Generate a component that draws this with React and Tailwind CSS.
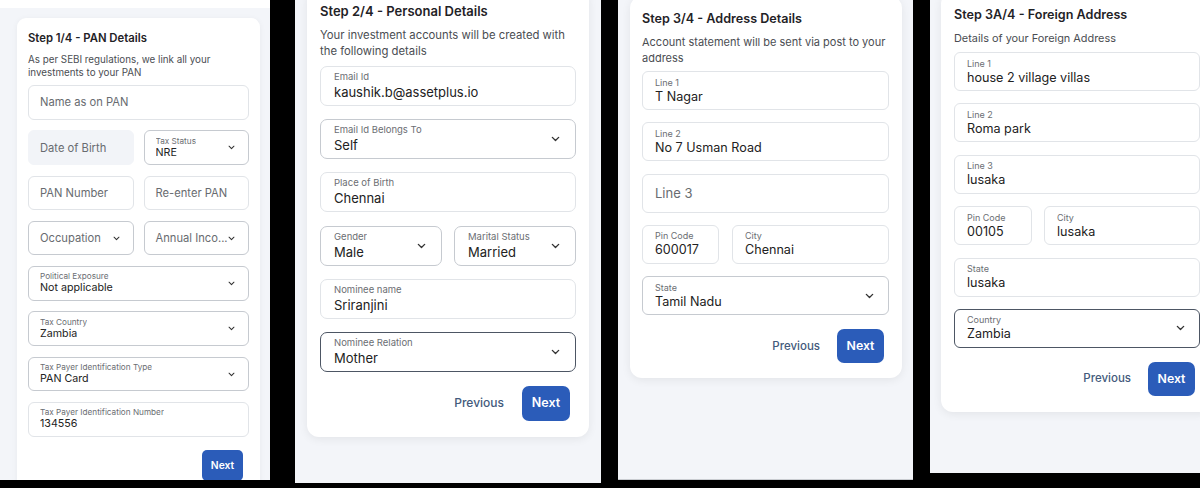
import React from "react"

function ChevronDown({ className }) {
  return (
    <svg viewBox="0 0 10 6" className={className} fill="none" stroke="currentColor" strokeWidth="1.5" strokeLinecap="round" strokeLinejoin="round">
      <path d="M1.5 1.2l3.5 3.5 3.5-3.5" />
    </svg>
  )
}

const S1 = {
  box: "h-[34.5px] rounded-[6px] px-[11px]",
  label: "text-[8.2px] leading-[10px] text-[#6b6e73] truncate",
  value: "text-[10.7px] leading-[14px] text-[#222] truncate",
  placeholder: "text-[11.2px] leading-[14px] text-[#686b70] whitespace-nowrap",
  chev: "w-[7px] h-[5px] text-[#333] shrink-0 mr-[2px]",
}
const S2 = {
  box: "h-[40px] rounded-[7px] px-[13px]",
  label: "text-[9.5px] leading-[12px] text-[#6b6e73] truncate",
  value: "text-[13px] leading-[18px] text-[#222] truncate",
  placeholder: "text-[13px] leading-[18px] text-[#686b70] whitespace-nowrap",
  chev: "w-[9px] h-[6px] text-[#333] shrink-0 mr-[2px]",
}
const S3 = {
  box: "h-[39px] rounded-[6px] px-[12px]",
  label: "text-[9px] leading-[11px] text-[#6b6e73] truncate",
  value: "text-[12.6px] leading-[17px] text-[#222] truncate",
  placeholder: "text-[13px] leading-[17px] text-[#686b70] whitespace-nowrap",
  chev: "w-[9px] h-[6px] text-[#333] shrink-0 mr-[2px]",
}

const BORDERS = {
  input: "border-[#e1e4e8] bg-white",
  select: "border-[#c6cad0] bg-white",
  focus: "border-[#4d5664] bg-white",
  disabled: "border-[#f2f4f8] bg-[#f2f4f8]",
}

function Field({ s, label, value, placeholder, select, kind = "input" }) {
  return (
    <div className={`flex items-center justify-between gap-0.5 border ${BORDERS[kind]} ${s.box}`}>
      <div className="flex flex-col min-w-0">
        {label && <span className={s.label}>{label}</span>}
        {value ? <span className={s.value}>{value}</span> : <span className={s.placeholder}>{placeholder}</span>}
      </div>
      {select && <ChevronDown className={s.chev} />}
    </div>
  )
}

function Buttons() {
  return (
    <div className="flex justify-end items-center gap-[17px] pr-[5px]">
      <span className="text-[11.5px] font-medium text-[#435a7c]">Previous</span>
      <button className="w-[47px] h-[34px] rounded-[7px] bg-[#2b5cb9] text-white text-[12.3px] font-semibold">Next</button>
    </div>
  )
}

export default function App() {
  return (
    <div className="w-[1200px] h-[488px] bg-black flex items-start overflow-hidden font-['Inter',sans-serif]">
      {/* Step 1 */}
      <div className="w-[270px] h-[480px] shrink-0 bg-[#f3f5f9] overflow-hidden flex flex-col">
        <div className="h-[8px] bg-white shrink-0" />
        <div className="mt-[10px] ml-[17px] w-[243px] bg-white rounded-t-[9px] px-[11px] pt-[12px] pb-[10px] shadow-[0_1px_6px_rgba(0,0,0,0.05)]">
          <h2 className="text-[11.3px] leading-[16px] font-semibold text-[#1f2226]">Step 1/4 - PAN Details</h2>
          <p className="mt-[6.5px] text-[9.8px] leading-[13px] text-[#4a4d52]">
            As per SEBI regulations, we link all your<br />investments to your PAN
          </p>
          <div className="mt-[6.5px] flex flex-col gap-[10.8px]">
            <Field s={S1} placeholder="Name as on PAN" />
            <div className="grid grid-cols-2 gap-[10px]">
              <Field s={S1} placeholder="Date of Birth" kind="disabled" />
              <Field s={S1} label="Tax Status" value="NRE" select kind="select" />
            </div>
            <div className="grid grid-cols-2 gap-[10px]">
              <Field s={S1} placeholder="PAN Number" />
              <Field s={S1} placeholder="Re-enter PAN" />
            </div>
            <div className="grid grid-cols-2 gap-[10px]">
              <Field s={S1} placeholder="Occupation" select kind="select" />
              <Field s={S1} placeholder="Annual Inco..." select kind="select" />
            </div>
            <Field s={S1} label="Political Exposure" value="Not applicable" select kind="select" />
            <Field s={S1} label="Tax Country" value="Zambia" select kind="select" />
            <Field s={S1} label="Tax Payer Identification Type" value="PAN Card" select kind="select" />
            <Field s={S1} label="Tax Payer Identification Number" value="134556" />
          </div>
          <div className="mt-[13.5px] flex justify-end pr-[6px]">
            <button className="w-[41px] h-[31px] rounded-[5px] bg-[#2b5cb9] text-white text-[10.3px] font-semibold">Next</button>
          </div>
        </div>
      </div>

      {/* Step 2 */}
      <div className="ml-[25px] w-[306px] h-[483px] shrink-0 bg-[#f3f5f9] overflow-hidden">
        <div className="mt-[-12px] ml-[12px] w-[282px] bg-white rounded-[12px] px-[13px] pt-[13px] pb-[16px] shadow-[0_2px_10px_rgba(0,0,0,0.07)]">
          <h2 className="text-[13px] leading-[20px] font-semibold text-[#1f2226]">Step 2/4 - Personal Details</h2>
          <p className="mt-[6px] text-[11.3px] leading-[16px] text-[#4a4d52]">
            Your investment accounts will be created with<br />the following details
          </p>
          <div className="mt-[7px] flex flex-col gap-[13.2px]">
            <Field s={S2} label="Email Id" value="kaushik.b@assetplus.io" />
            <Field s={S2} label="Email Id Belongs To" value="Self" select kind="select" />
            <Field s={S2} label="Place of Birth" value="Chennai" />
            <div className="grid grid-cols-2 gap-[12px]">
              <Field s={S2} label="Gender" value="Male" select kind="select" />
              <Field s={S2} label="Marital Status" value="Married" select kind="select" />
            </div>
            <Field s={S2} label="Nominee name" value="Sriranjini" />
            <Field s={S2} label="Nominee Relation" value="Mother" select kind="focus" />
          </div>
          <div className="mt-[14px] flex justify-end items-center gap-[18px] pr-[6px]">
            <span className="text-[12px] font-medium text-[#435a7c]">Previous</span>
            <button className="w-[48px] h-[35px] rounded-[7px] bg-[#2b5cb9] text-white text-[12.5px] font-semibold">Next</button>
          </div>
        </div>
      </div>

      {/* Step 3 */}
      <div className="ml-[17px] w-[295px] h-[480px] shrink-0 bg-[#f3f5f9] overflow-hidden border-b border-[#c9ccd1]">
        <div className="mt-[-4px] ml-[12px] w-[272px] bg-white rounded-[12px] pl-[12px] pr-[13px] pt-[14px] pb-[15px] shadow-[0_2px_10px_rgba(0,0,0,0.07)]">
          <h2 className="text-[12.6px] leading-[18px] font-semibold text-[#1f2226]">Step 3/4 - Address Details</h2>
          <p className="mt-[6px] text-[11px] leading-[16px] text-[#4a4d52]">
            Account statement will be sent via post to your<br />address
          </p>
          <div className="mt-[5px] flex flex-col gap-[12.3px]">
            <Field s={S3} label="Line 1" value="T Nagar" />
            <Field s={S3} label="Line 2" value="No 7 Usman Road" />
            <Field s={S3} placeholder="Line 3" />
            <div className="grid grid-cols-[77px_1fr] gap-[13px]">
              <Field s={S3} label="Pin Code" value="600017" />
              <Field s={S3} label="City" value="Chennai" />
            </div>
            <Field s={S3} label="State" value="Tamil Nadu" select kind="select" />
          </div>
          <div className="mt-[14px]">
            <Buttons />
          </div>
        </div>
      </div>

      {/* Step 3A */}
      <div className="ml-[17px] w-[270px] h-[473px] shrink-0 bg-[#f3f5f9] overflow-hidden">
        <div className="mt-[-8px] ml-[11px] w-[272px] bg-white rounded-[12px] px-[13px] pt-[14px] pb-[16px] shadow-[0_2px_10px_rgba(0,0,0,0.07)]">
          <h2 className="text-[12.6px] leading-[18px] font-semibold text-[#1f2226]">Step 3A/4 - Foreign Address</h2>
          <p className="mt-[6px] text-[10.9px] leading-[16px] text-[#4a4d52]">Details of your Foreign Address</p>
          <div className="mt-[6px] flex flex-col gap-[12.4px]">
            <Field s={S3} label="Line 1" value="house 2 village villas" />
            <Field s={S3} label="Line 2" value="Roma park" />
            <Field s={S3} label="Line 3" value="lusaka" />
            <div className="grid grid-cols-[78px_1fr] gap-[12px]">
              <Field s={S3} label="Pin Code" value="00105" />
              <Field s={S3} label="City" value="lusaka" />
            </div>
            <Field s={S3} label="State" value="lusaka" />
            <Field s={S3} label="Country" value="Zambia" select kind="focus" />
          </div>
          <div className="mt-[14px]">
            <Buttons />
          </div>
        </div>
      </div>
    </div>
  )
}
